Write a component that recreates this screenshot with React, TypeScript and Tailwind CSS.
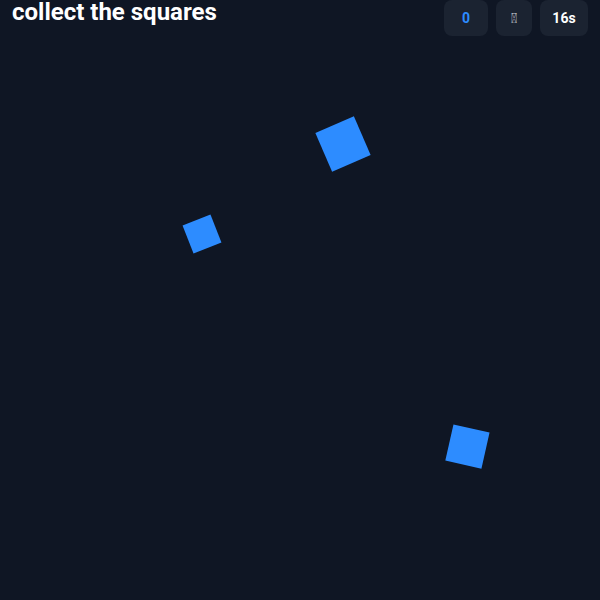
import React from 'react';

const squares = [
  { x: 342.5, y: 143.5, size: 42, rot: -23.5 },
  { x: 202, y: 233.5, size: 30, rot: -21.5 },
  { x: 467, y: 446, size: 36.5, rot: 12.7 },
];

export default function App() {
  return (
    <div className="relative w-[600px] h-[600px] overflow-hidden bg-[#0f1624] font-['Roboto',sans-serif] text-white">
      <div className="flex items-start justify-between pl-3 pr-3">
        <h1 className="text-[24px] font-bold leading-[24px]">collect the squares</h1>
        <div className="flex gap-2">
          <div className="flex h-9 w-11 items-center justify-center rounded-lg bg-[#1b2331] text-sm font-bold text-[#2d8cff]">0</div>
          <div className="flex h-9 w-9 items-center justify-center rounded-lg bg-[#1b2331] text-sm text-gray-300">{'\u{10FFFD}'}</div>
          <div className="flex h-9 w-12 items-center justify-center rounded-lg bg-[#1b2331] text-sm font-bold">16s</div>
        </div>
      </div>
      {squares.map((s, i) => (
        <div
          key={i}
          className="absolute bg-[#2d8cff]"
          style={{
            left: s.x - s.size / 2,
            top: s.y - s.size / 2,
            width: s.size,
            height: s.size,
            transform: `rotate(${s.rot}deg)`,
          }}
        />
      ))}
    </div>
  );
}
